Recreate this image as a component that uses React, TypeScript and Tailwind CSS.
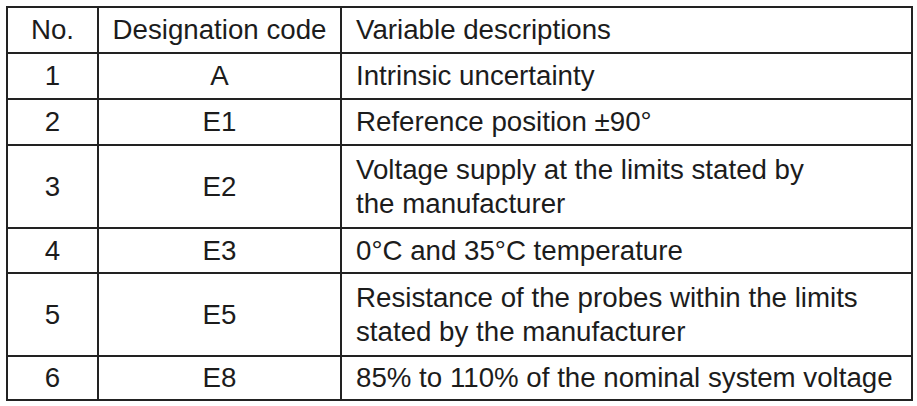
import React from 'react';

type Row = {
  no: string;
  code: string;
  desc: React.ReactNode;
  h: string;
};

const rows: Row[] = [
  { no: '1', code: 'A', desc: 'Intrinsic uncertainty', h: 'h-[46px]' },
  { no: '2', code: 'E1', desc: 'Reference position ±90°', h: 'h-[46px]' },
  {
    no: '3',
    code: 'E2',
    desc: (
      <>
        Voltage supply at the limits stated by
        <br />
        the manufacturer
      </>
    ),
    h: 'h-[83px]',
  },
  { no: '4', code: 'E3', desc: '0°C and 35°C temperature', h: 'h-[45px]' },
  {
    no: '5',
    code: 'E5',
    desc: (
      <>
        Resistance of the probes within the limits
        <br />
        stated by the manufacturer
      </>
    ),
    h: 'h-[83px]',
  },
  { no: '6', code: 'E8', desc: '85% to 110% of the nominal system voltage', h: 'h-[44px]' },
];

const cell = 'border-r-2 border-b-2 border-[#222] flex items-center';

const App: React.FC = () => {
  return (
    <div className="w-[917px] h-[406px] bg-white pt-[6px] pl-[6px] overflow-hidden">
      <div
        className="w-[907px] border-l-2 border-t-2 border-[#222] text-[27.7px] leading-[34px] text-[#1c1c1c]"
        style={{ fontFamily: '"Liberation Sans", Arial, sans-serif' }}
      >
        {/* Header */}
        <div className="grid grid-cols-[91px_243px_571px] h-[46px]">
          <div className={`${cell} justify-center`}>No.</div>
          <div className={`${cell} justify-center`}>Designation code</div>
          <div className={`${cell} pl-[14px]`}>Variable descriptions</div>
        </div>

        {rows.map((r) => (
          <div key={r.no} className={`grid grid-cols-[91px_243px_571px] ${r.h}`}>
            <div className={`${cell} justify-center`}>{r.no}</div>
            <div className={`${cell} justify-center`}>{r.code}</div>
            <div className={`${cell} pl-[14px]`}>
              <div>{r.desc}</div>
            </div>
          </div>
        ))}
      </div>
    </div>
  );
};

export default App;
